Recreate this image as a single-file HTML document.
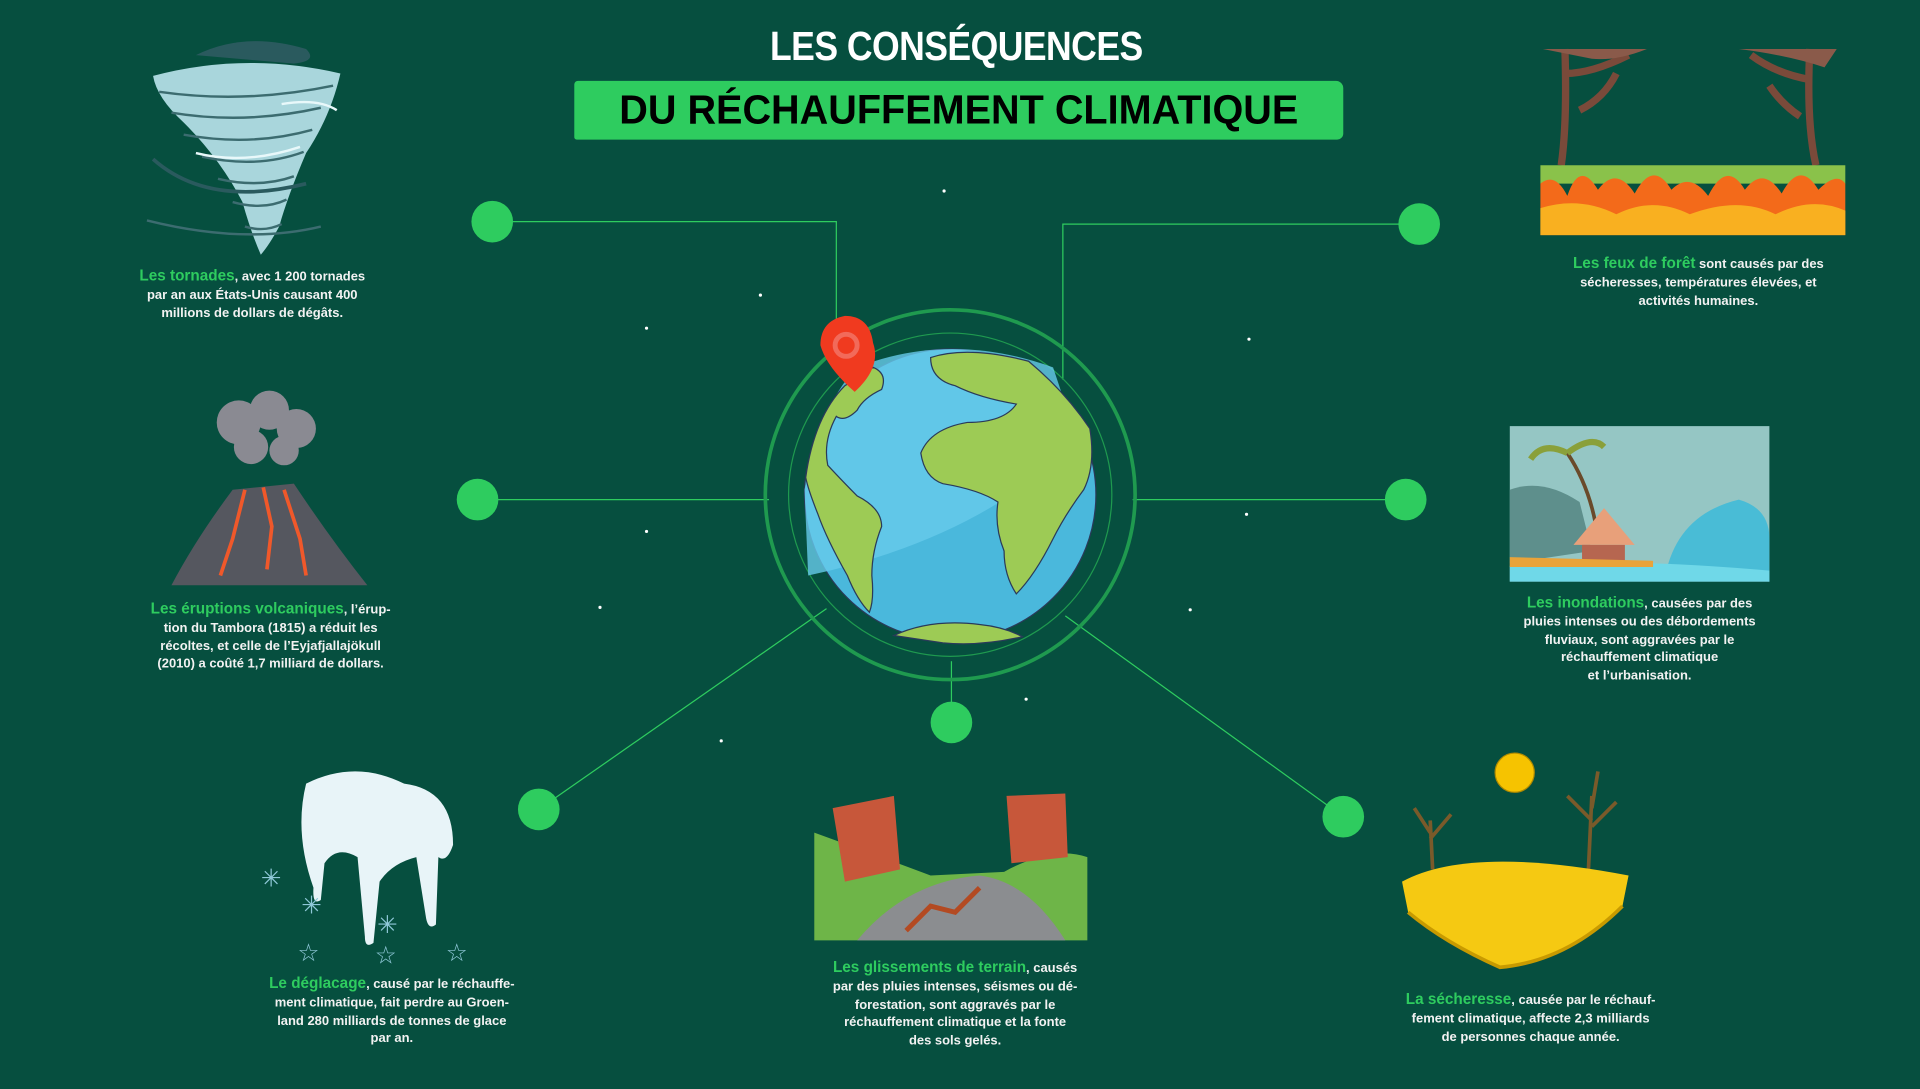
<!DOCTYPE html>
<html><head><meta charset="utf-8"><style>
html,body{margin:0;padding:0;background:#064f3f;width:1920px;height:1088px;overflow:hidden}
#s{position:absolute;left:0;top:0;width:1568px;height:889px;transform:scale(1.22449);transform-origin:0 0;font-family:"Liberation Sans",sans-serif}
.t{position:absolute;color:#f2f2f2;font-weight:bold;font-size:10.6px;line-height:14.8px;text-align:center;white-space:nowrap;transform:translateX(-50%)}
.t b{color:#2ecc5f;font-size:12.5px}
.h1{position:absolute;left:0;width:1562px;top:19px;text-align:center;color:#fff;font-weight:bold;font-size:33px;letter-spacing:-0.5px;transform:scaleX(0.88)}
.ban{position:absolute;left:469px;top:66px;width:628px;height:48px;background:#2ecc5f;border-radius:3px 6px 5px 2px}
.h2{position:absolute;left:469px;width:628px;top:71px;text-align:center;color:#000;font-weight:bold;font-size:33px;letter-spacing:0px;transform:scaleX(0.98)}
</style></head><body><div id="s">
<svg width="1568" height="889" style="position:absolute;left:0;top:0">
<g stroke="#2ecc5f" stroke-width="1" fill="none">
<polyline points="402,181 683,181 683,262"/>
<polyline points="1159,183 868,183 868,310"/>
<line x1="390" y1="408" x2="628" y2="408"/><line x1="925" y1="408" x2="1148" y2="408"/>
<line x1="777" y1="540" x2="777" y2="590"/>
<line x1="440" y1="661" x2="675" y2="497"/><line x1="1097" y1="667" x2="870" y2="503"/>
</g>
<g fill="#2ecc5f"><circle cx="402" cy="181" r="17"/><circle cx="1159" cy="183" r="17"/><circle cx="390" cy="408" r="17"/><circle cx="1148" cy="408" r="17"/><circle cx="777" cy="590" r="17"/><circle cx="440" cy="661" r="17"/><circle cx="1097" cy="667" r="17"/></g>
<g fill="#fff"><circle cx="771" cy="156" r="1.3"/><circle cx="621" cy="241" r="1.3"/><circle cx="528" cy="268" r="1.3"/><circle cx="1020" cy="277" r="1.3"/><circle cx="528" cy="434" r="1.3"/><circle cx="1018" cy="420" r="1.3"/><circle cx="490" cy="496" r="1.3"/><circle cx="972" cy="498" r="1.3"/><circle cx="589" cy="605" r="1.3"/><circle cx="838" cy="571" r="1.3"/></g>
<!-- globe -->
<circle cx="776" cy="404" r="151" fill="none" stroke="#1f9a4f" stroke-width="3"/>
<circle cx="776" cy="404" r="132" fill="none" stroke="#1f9a4f" stroke-width="1"/>
<circle cx="776" cy="404" r="119" fill="#4ab8dc" stroke="#2a3a5a" stroke-width="1"/>
<path d="M700,300 Q776,270 860,300 L880,360 Q800,440 660,470 L657,400 Q670,330 700,300Z" fill="#67cbeb" opacity="0.8"/>
<path d="M713,300 Q725,305 720,318 Q705,325 700,335 Q690,345 683,340 Q672,360 676,380 Q690,395 700,405 Q720,415 720,430 Q712,450 712,470 Q714,490 710,500 Q700,490 692,470 Q675,440 668,420 Q660,400 658,390 Q665,340 690,315Z" fill="#9dcb55" stroke="#2a3a5a" stroke-width="1"/>
<path d="M760,292 Q790,282 840,295 Q870,320 890,350 Q895,380 885,400 Q870,420 860,440 Q845,470 830,485 Q820,470 820,450 Q812,430 815,410 Q800,400 770,395 Q755,390 752,370 Q760,350 790,345 Q820,345 830,330 Q800,325 780,315 Q760,310 760,292Z" fill="#9dcb55" stroke="#2a3a5a" stroke-width="1"/>
<path d="M730,519 Q760,505 800,510 Q820,512 835,520 Q800,528 770,525Z" fill="#9dcb55" stroke="#2a3a5a" stroke-width="1"/>
<path d="M690,258 Q670,262 670,282 Q675,300 698,320 Q720,300 713,280 Q710,258 690,258Z" fill="#f03a1f"/>
<circle cx="691" cy="282" r="9" fill="none" stroke="#f26a5a" stroke-width="4"/>
<!-- tornado -->
<path d="M160,45 Q200,25 250,40 Q260,50 240,52Z" fill="#2a5a5e"/>
<path d="M125,62 Q200,42 278,60 Q270,95 250,125 Q235,160 228,185 Q220,200 213,208 Q205,190 198,165 Q180,130 150,100 Q128,80 125,62Z" fill="#a9d6dc"/>
<g stroke="#3c6c70" stroke-width="2" fill="none"><path d="M130,75 Q200,85 272,70"/><path d="M140,92 Q200,102 262,88"/><path d="M150,110 Q205,120 255,106"/><path d="M165,128 Q210,138 248,124"/><path d="M178,146 Q212,154 240,144"/><path d="M190,165 Q215,172 234,163"/><path d="M200,185 Q216,190 230,183"/><path d="M120,180 Q200,200 262,185"/><path d="M125,130 Q170,170 250,150" stroke="#2a5a5e" stroke-width="3"/></g>
<g stroke="#e8f8fa" stroke-width="2" fill="none"><path d="M160,125 Q200,135 245,120"/><path d="M230,85 Q260,80 275,90"/></g>
<!-- volcano -->
<g fill="#8a8a92"><circle cx="195" cy="345" r="18"/><circle cx="220" cy="335" r="16"/><circle cx="242" cy="350" r="16"/><circle cx="205" cy="365" r="14"/><circle cx="232" cy="368" r="12"/></g>
<path d="M140,478 Q160,440 190,400 L240,395 Q270,440 300,478Z" fill="#55575f"/>
<g stroke="#f0582a" stroke-width="3" fill="none"><path d="M200,400 L190,440 L180,470"/><path d="M215,398 L222,430 L218,465"/><path d="M232,400 L245,440 L250,470"/></g>
<!-- ice -->
<path d="M250,640 Q290,620 330,640 Q370,645 370,690 Q365,705 358,700 L356,755 Q350,760 348,750 L340,700 Q320,705 310,720 L305,770 Q298,775 298,765 L292,700 Q275,690 265,705 L262,735 Q255,740 256,725 Q240,680 250,640Z" fill="#e8f4f8"/>
<g fill="#8fc8d8" font-size="20"><text x="213" y="724">✳</text><text x="246" y="746">✳</text><text x="308" y="762">✳</text><text x="243" y="785">☆</text><text x="306" y="787">☆</text><text x="364" y="785">☆</text></g>
<!-- landslide -->
<path d="M665,680 Q720,700 760,715 L820,712 Q860,690 888,700 L888,768 L665,768Z" fill="#6eb548"/>
<path d="M700,768 Q740,720 800,715 Q840,720 870,768Z" fill="#8b8d90"/>
<path d="M740,760 L760,740 L780,745 L800,725" stroke="#b34a22" stroke-width="4" fill="none"/>
<path d="M680,660 L730,650 L735,710 L690,720Z" fill="#c7573a"/>
<path d="M822,650 L870,648 L872,700 L826,705Z" fill="#c7573a"/>
<!-- drought -->
<circle cx="1237" cy="631" r="16" fill="#f6c300" stroke="#b08a00"/>
<g stroke="#7a5a2a" stroke-width="3" fill="none"><path d="M1170,710 L1168,670 M1168,680 L1155,660 M1168,685 L1185,665"/><path d="M1297,715 L1300,650 M1300,670 L1280,650 M1300,660 L1305,630 M1300,675 L1320,655"/></g>
<path d="M1145,720 Q1200,690 1330,715 L1325,740 Q1280,785 1225,790 Q1180,770 1150,745Z" fill="#f5c912"/>
<path d="M1150,745 Q1180,770 1225,790 Q1280,785 1325,740" stroke="#c89a00" fill="none" stroke-width="3"/>
<!-- flood -->
<rect x="1233" y="348" width="212" height="127" fill="#95c6c4"/>
<path d="M1233,400 Q1260,390 1290,410 L1300,450 L1233,460Z" fill="#5e8f8c"/>
<path d="M1305,440 Q1300,400 1280,370" stroke="#6a4a2a" stroke-width="3" fill="none"/>
<path d="M1280,370 Q1260,360 1250,375 M1280,370 Q1300,355 1310,365" stroke="#8aa03a" stroke-width="5" fill="none"/>
<path d="M1285,445 L1310,415 L1335,445Z" fill="#e8a07a"/>
<rect x="1292" y="445" width="35" height="15" fill="#b66650"/>
<path d="M1360,470 Q1370,420 1420,408 Q1445,415 1445,440 L1445,475Z" fill="#49bcd6"/>
<path d="M1233,462 Q1320,455 1445,466 L1445,475 L1233,475Z" fill="#6fd8e8"/>
<path d="M1233,455 L1350,458 L1350,463 L1233,463Z" fill="#e9a33a"/>
<!-- fire -->
<g stroke="#7a4a3a" stroke-width="6" fill="none"><path d="M1278,40 Q1280,100 1275,135"/><path d="M1478,40 Q1475,100 1483,135"/><path d="M1278,60 Q1300,60 1330,45"/><path d="M1478,65 Q1450,60 1430,45"/><path d="M1290,90 Q1310,80 1320,60"/><path d="M1470,95 Q1455,85 1445,70"/></g>
<path d="M1260,40 L1345,40 Q1320,50 1300,48 Z M1420,40 L1500,40 L1490,55 Q1460,45 1420,40Z" fill="#8a5a4a"/>
<path d="M1258,135 L1507,135 L1507,150 L1258,150Z" fill="#8ac24a"/>
<path d="M1258,192 L1258,150 Q1270,140 1280,160 Q1290,130 1305,155 Q1320,135 1335,158 Q1350,130 1365,155 Q1380,140 1395,160 Q1410,130 1425,155 Q1440,135 1455,158 Q1470,130 1485,155 Q1500,140 1507,150 L1507,192Z" fill="#f36a1a"/>
<path d="M1258,192 L1258,170 Q1290,160 1320,175 Q1350,160 1380,175 Q1420,160 1450,175 Q1480,160 1507,172 L1507,192Z" fill="#f9b020"/>
</svg>
<div class="h1">LES CONSÉQUENCES</div>
<div class="ban"></div><div class="h2">DU RÉCHAUFFEMENT CLIMATIQUE</div>
<div class="t" style="left:206px;top:218px"><b>Les tornades</b>, avec 1 200 tornades<br>par an aux États-Unis causant 400<br>millions de dollars de dégâts.</div>
<div class="t" style="left:221px;top:490px"><b>Les éruptions volcaniques</b>, l’érup-<br>tion du Tambora (1815) a réduit les<br>récoltes, et celle de l’Eyjafjallajökull<br>(2010) a coûté 1,7 milliard de dollars.</div>
<div class="t" style="left:320px;top:796px"><b>Le déglacage</b>, causé par le réchauffe-<br>ment climatique, fait perdre au Groen-<br>land 280 milliards de tonnes de glace<br>par an.</div>
<div class="t" style="left:780px;top:783px"><b>Les glissements de terrain</b>, causés<br>par des pluies intenses, séismes ou dé-<br>forestation, sont aggravés par le<br>réchauffement climatique et la fonte<br>des sols gelés.</div>
<div class="t" style="left:1250px;top:809px"><b>La sécheresse</b>, causée par le réchauf-<br>fement climatique, affecte 2,3 milliards<br>de personnes chaque année.</div>
<div class="t" style="left:1339px;top:485px"><b>Les inondations</b>, causées par des<br>pluies intenses ou des débordements<br>fluviaux, sont aggravées par le<br>réchauffement climatique<br>et l’urbanisation.</div>
<div class="t" style="left:1387px;top:208px"><b>Les feux de forêt</b> sont causés par des<br>sécheresses, températures élevées, et<br>activités humaines.</div>
</div></body></html>
